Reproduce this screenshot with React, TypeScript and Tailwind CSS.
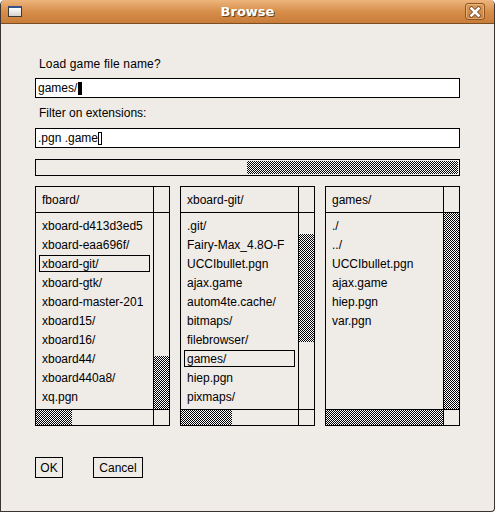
import React from "react";

const checker =
  "bg-[image:repeating-conic-gradient(#000_0%_25%,#fff_0%_50%)] bg-[length:2px_2px]";

type ListProps = {
  header: string;
  items: string[];
  selected?: string;
  vTop: number;
  vHeight: number;
  hWidth: number;
};

function FileList({ header, items, selected, vTop, vHeight, hWidth }: ListProps) {
  return (
    <div className="w-[135px] h-[240px] border border-black flex flex-col">
      <div className="flex h-[26px] border-b border-black">
        <div className="w-[117px] pl-[6px] flex items-center whitespace-nowrap overflow-hidden">
          {header}
        </div>
        <div className="w-[16px] border-l border-black" />
      </div>
      <div className="flex h-[197px] border-b border-black">
        <div className="w-[117px] overflow-hidden pt-[3px]">
          {items.map((it) => (
            <div key={it} className="h-[19px] flex items-center whitespace-nowrap">
              {it === selected ? (
                <div className="ml-[3px] w-[111px] h-[17px] border border-black pl-[2px] flex items-center overflow-hidden">
                  {it}
                </div>
              ) : (
                <div className="pl-[6px]">{it}</div>
              )}
            </div>
          ))}
        </div>
        <div className="w-[16px] border-l border-black">
          <div className={checker} style={{ marginTop: vTop, height: vHeight }} />
        </div>
      </div>
      <div className="flex h-[15px]">
        <div className="w-[117px]">
          <div className={`h-full ${checker}`} style={{ width: hWidth }} />
        </div>
        <div className="w-[16px] border-l border-black" />
      </div>
    </div>
  );
}

export default function App() {
  return (
    <div className="w-[495px] h-[512px] flex flex-col bg-[#EFEBE7] border-x border-b border-[#3c3430] rounded-t-[5px] rounded-br-[4px] overflow-hidden font-['Liberation_Sans',Arial,sans-serif] text-[12px] text-black">
      {/* Title bar */}
      <div className="h-[24px] shrink-0 border-b border-[#7a4f24] bg-gradient-to-b from-[#EDB57C] via-[#D78E4A] to-[#C97D3A] grid grid-cols-[1fr_auto_1fr] items-center">
        <div className="pl-[7px] flex items-center">
          <div className="w-[14px] h-[11px] border border-[#3a3a3a] border-t-[2px] border-t-[#34558c] bg-gradient-to-b from-[#ffffff] to-[#d6d3cf]" />
        </div>
        <div className="font-['DejaVu_Sans',sans-serif] font-bold text-[13px] text-white [text-shadow:1px_1px_0_#6b4420] leading-none pb-[1px]">
          Browse
        </div>
        <div className="flex justify-end pr-[9px]">
          <div className="w-[20px] h-[17px] rounded-[3px] border border-[#8c5524] bg-gradient-to-b from-[#DC9A5A] to-[#C9803F] flex items-center justify-center shadow-[inset_0_0_0_1px_rgba(255,220,180,0.45)]">
            <svg width="12" height="12" viewBox="0 0 12 12">
              <path d="M2.5 2.5 L9.5 9.5 M9.5 2.5 L2.5 9.5" stroke="#7a4a20" strokeWidth="4.2" strokeLinecap="square" />
              <path d="M2.5 2.5 L9.5 9.5 M9.5 2.5 L2.5 9.5" stroke="#ffffff" strokeWidth="2.6" strokeLinecap="square" />
            </svg>
          </div>
        </div>
      </div>

      {/* Content */}
      <div className="flex flex-col px-[34px]">
        <div className="mt-[33px] h-[14px] leading-[14px] pl-[4px] tracking-[0.15px]">Load game file name?</div>
        <div className="mt-[7px] h-[20px] border border-black bg-white flex items-center pl-[2px]">
          <span>games/</span>
          <span className="ml-[1px] w-[4px] h-[13px] bg-black" />
        </div>
        <div className="mt-[8px] h-[14px] leading-[14px] pl-[4px]">Filter on extensions:</div>
        <div className="mt-[8px] h-[20px] border border-black bg-white flex items-center pl-[2px]">
          <span>.pgn .game</span>
          <span className="w-[4px] h-[13px] border border-black" />
        </div>
        <div className="mt-[11px] h-[17px] border border-black p-[1px] flex">
          <div className="w-[210px]" />
          <div className={`flex-1 ${checker}`} />
        </div>

        <div className="mt-[10px] flex gap-[10px]">
          <FileList
            header="fboard/"
            items={[
              "xboard-d413d3ed5",
              "xboard-eaa696f/",
              "xboard-git/",
              "xboard-gtk/",
              "xboard-master-201",
              "xboard15/",
              "xboard16/",
              "xboard44/",
              "xboard440a8/",
              "xq.pgn",
            ]}
            selected="xboard-git/"
            vTop={143}
            vHeight={53}
            hWidth={36}
          />
          <FileList
            header="xboard-git/"
            items={[
              ".git/",
              "Fairy-Max_4.8O-F",
              "UCCIbullet.pgn",
              "ajax.game",
              "autom4te.cache/",
              "bitmaps/",
              "filebrowser/",
              "games/",
              "hiep.pgn",
              "pixmaps/",
            ]}
            selected="games/"
            vTop={21}
            vHeight={108}
            hWidth={51}
          />
          <FileList
            header="games/"
            items={["./", "../", "UCCIbullet.pgn", "ajax.game", "hiep.pgn", "var.pgn"]}
            vTop={0}
            vHeight={196}
            hWidth={117}
          />
        </div>

        <div className="mt-[31px] flex gap-[30px]">
          <button className="w-[28px] h-[21px] border border-black flex items-center justify-center">
            OK
          </button>
          <button className="w-[50px] h-[21px] border border-black flex items-center justify-center">
            Cancel
          </button>
        </div>
      </div>
    </div>
  );
}
